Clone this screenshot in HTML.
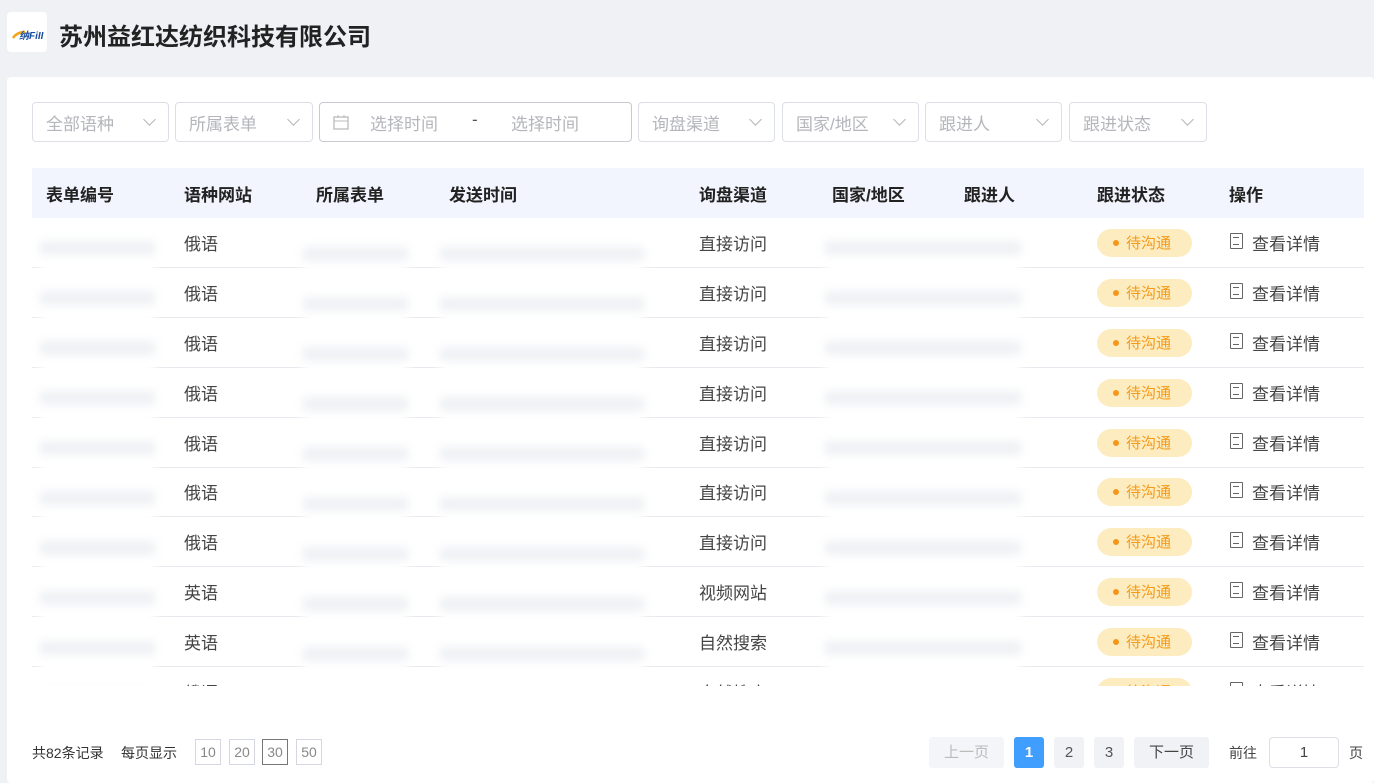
<!DOCTYPE html>
<html><head><meta charset="utf-8"><style>
*{margin:0;padding:0;box-sizing:border-box}
body{width:1374px;height:783px;background:#f0f1f5;font-family:"Liberation Sans","Noto Sans CJK SC",sans-serif;position:relative;overflow:hidden;color:#333}
.logo{position:absolute;left:7px;top:12px;width:40px;height:40px;background:#fff;border-radius:4px}
.title{position:absolute;left:59px;top:17px;font-size:24px;font-weight:bold;color:#222}
.card{position:absolute;left:7px;top:77px;width:1367px;height:706px;background:#fff;border-radius:4px}
.sel{position:absolute;top:102px;height:40px;border:1px solid #dcdfe6;border-radius:4px;font-size:17px;color:#b4b6bb;padding:7px 13px;background:#fff}
.sel i{position:absolute;right:14px;top:12px;width:9px;height:9px;border-right:1.5px solid #b4b6bb;border-bottom:1.5px solid #b4b6bb;transform:rotate(45deg)}
.thead{position:absolute;left:32px;top:168px;width:1332px;height:50px;background:#f2f5fd;font-size:17px;font-weight:bold;color:#222}
.c{position:absolute;white-space:nowrap}
.row{position:absolute;left:32px;width:1332px;height:50px;border-bottom:1px solid #e8e9ee;font-size:17px;color:#444}
.tag{position:absolute;left:1065px;top:11px;width:95px;height:28px;border-radius:14px;background:#fdecc0;color:#f59a18;font-size:15px;padding:3px 0 0 29px}
.tag:before{content:"";position:absolute;left:16px;top:11px;width:6px;height:6px;border-radius:3px;background:#f5961a}
.doc{position:absolute;left:1198px;top:15px;width:13px;height:16px;border:1.5px solid #666;border-radius:1px}
.doc:after{content:"";position:absolute;left:2px;top:3px;width:6px;height:6px;border-top:1.5px solid #666;border-bottom:1.5px solid #666}
.blur{position:absolute;filter:blur(5px);background:repeating-linear-gradient(to bottom,#fff 0 18px,#eceef2 18px 30px,#fff 30px 50px)}
.pg{position:absolute;top:737px;height:31px;font-size:15px;color:#555;text-align:center;line-height:31px;border-radius:3px}
.ps{position:absolute;top:739px;width:26px;height:26px;border:1px solid #d4d7e2;font-size:14px;color:#888;text-align:center;line-height:24px}
</style></head><body>
<div class="logo"><svg width="40" height="40"><path d="M6 26 Q10 20 18 20" stroke="#f2a51a" stroke-width="2.5" fill="none"/><text x="12" y="27" font-size="10" font-style="italic" font-weight="bold" fill="#1a4fa0" font-family="Liberation Sans,Noto Sans CJK SC">纳FiII</text></svg></div>
<div class="title">苏州益红达纺织科技有限公司</div>
<div class="card"></div>
<div class="sel" style="left:32px;width:137px">全部语种<i></i></div>
<div class="sel" style="left:175px;width:138px">所属表单<i></i></div>
<div class="sel" style="left:319px;width:313px;border-color:#c8cad0"><svg style="position:absolute;left:13px;top:12px" width="16" height="15"><rect x="1" y="2" width="14" height="12" fill="none" stroke="#bbb" stroke-width="1.3"/><line x1="1" y1="6" x2="15" y2="6" stroke="#bbb"/><line x1="5" y1="0" x2="5" y2="3" stroke="#bbb"/><line x1="11" y1="0" x2="11" y2="3" stroke="#bbb"/></svg><span style="position:absolute;left:50px;top:7px">选择时间</span><span style="position:absolute;left:152px;top:7px;color:#555">-</span><span style="position:absolute;left:191px;top:7px">选择时间</span></div>
<div class="sel" style="left:638px;width:137px">询盘渠道<i></i></div>
<div class="sel" style="left:782px;width:137px">国家/地区<i></i></div>
<div class="sel" style="left:925px;width:137px">跟进人<i></i></div>
<div class="sel" style="left:1069px;width:138px">跟进状态<i></i></div>
<div class="thead">
<span class="c" style="left:14px;top:13px">表单编号</span><span class="c" style="left:152px;top:13px">语种网站</span><span class="c" style="left:284px;top:13px">所属表单</span><span class="c" style="left:417px;top:13px">发送时间</span><span class="c" style="left:667px;top:13px">询盘渠道</span><span class="c" style="left:800px;top:13px">国家/地区</span><span class="c" style="left:932px;top:13px">跟进人</span><span class="c" style="left:1065px;top:13px">跟进状态</span><span class="c" style="left:1197px;top:13px">操作</span>
</div>
<div style="position:absolute;left:0;top:218px;width:1374px;height:468px;overflow:hidden">
<div class="row" style="top:0"><span class="c" style="left:152px;top:12px">俄语</span><span class="c" style="left:667px;top:12px">直接访问</span><div class="tag">待沟通</div><div class="doc"></div><span class="c" style="left:1220px;top:12px">查看详情</span></div>
<div class="row" style="top:50px"><span class="c" style="left:152px;top:12px">俄语</span><span class="c" style="left:667px;top:12px">直接访问</span><div class="tag">待沟通</div><div class="doc"></div><span class="c" style="left:1220px;top:12px">查看详情</span></div>
<div class="row" style="top:100px"><span class="c" style="left:152px;top:12px">俄语</span><span class="c" style="left:667px;top:12px">直接访问</span><div class="tag">待沟通</div><div class="doc"></div><span class="c" style="left:1220px;top:12px">查看详情</span></div>
<div class="row" style="top:150px"><span class="c" style="left:152px;top:12px">俄语</span><span class="c" style="left:667px;top:12px">直接访问</span><div class="tag">待沟通</div><div class="doc"></div><span class="c" style="left:1220px;top:12px">查看详情</span></div>
<div class="row" style="top:200px"><span class="c" style="left:152px;top:12px">俄语</span><span class="c" style="left:667px;top:12px">直接访问</span><div class="tag">待沟通</div><div class="doc"></div><span class="c" style="left:1220px;top:12px">查看详情</span></div>
<div class="row" style="top:249px"><span class="c" style="left:152px;top:12px">俄语</span><span class="c" style="left:667px;top:12px">直接访问</span><div class="tag">待沟通</div><div class="doc"></div><span class="c" style="left:1220px;top:12px">查看详情</span></div>
<div class="row" style="top:299px"><span class="c" style="left:152px;top:12px">俄语</span><span class="c" style="left:667px;top:12px">直接访问</span><div class="tag">待沟通</div><div class="doc"></div><span class="c" style="left:1220px;top:12px">查看详情</span></div>
<div class="row" style="top:349px"><span class="c" style="left:152px;top:12px">英语</span><span class="c" style="left:667px;top:12px">视频网站</span><div class="tag">待沟通</div><div class="doc"></div><span class="c" style="left:1220px;top:12px">查看详情</span></div>
<div class="row" style="top:399px"><span class="c" style="left:152px;top:12px">英语</span><span class="c" style="left:667px;top:12px">自然搜索</span><div class="tag">待沟通</div><div class="doc"></div><span class="c" style="left:1220px;top:12px">查看详情</span></div>
<div class="row" style="top:449px;border-bottom:3px solid #e8e9ee;height:49px"><span class="c" style="left:152px;top:12px">俄语</span><span class="c" style="left:667px;top:12px">自然搜索</span><div class="tag">待沟通</div><div class="doc"></div><span class="c" style="left:1220px;top:12px">查看详情</span></div>
<div class="blur" style="left:40px;top:6px;width:115px;height:470px"></div>
<div class="blur" style="left:303px;top:12px;width:105px;height:460px"></div>
<div class="blur" style="left:440px;top:12px;width:204px;height:460px"></div>
<div class="blur" style="left:825px;top:6px;width:196px;height:465px"></div>
</div>
<div style="position:absolute;left:32px;top:743px;font-size:14px;color:#333">共82条记录</div>
<div style="position:absolute;left:121px;top:743px;font-size:14px;color:#333">每页显示</div>
<div class="ps" style="left:195px">10</div><div class="ps" style="left:229px">20</div><div class="ps" style="left:262px;border-color:#777">30</div><div class="ps" style="left:296px">50</div>
<div class="pg" style="left:929px;width:75px;background:#f4f5f8;color:#bbb">上一页</div>
<div class="pg" style="left:1014px;width:30px;background:#409eff;color:#fff;font-weight:bold">1</div>
<div class="pg" style="left:1054px;width:30px;background:#f0f2f5">2</div>
<div class="pg" style="left:1094px;width:30px;background:#f0f2f5">3</div>
<div class="pg" style="left:1134px;width:75px;background:#f0f2f5;color:#444">下一页</div>
<div style="position:absolute;left:1229px;top:743px;font-size:14px;color:#444">前往</div>
<div style="position:absolute;left:1269px;top:737px;width:70px;height:31px;border:1px solid #dcdfe6;border-radius:4px;text-align:center;line-height:29px;font-size:15px;color:#444">1</div>
<div style="position:absolute;left:1349px;top:743px;font-size:14px;color:#444">页</div>
</body></html>
